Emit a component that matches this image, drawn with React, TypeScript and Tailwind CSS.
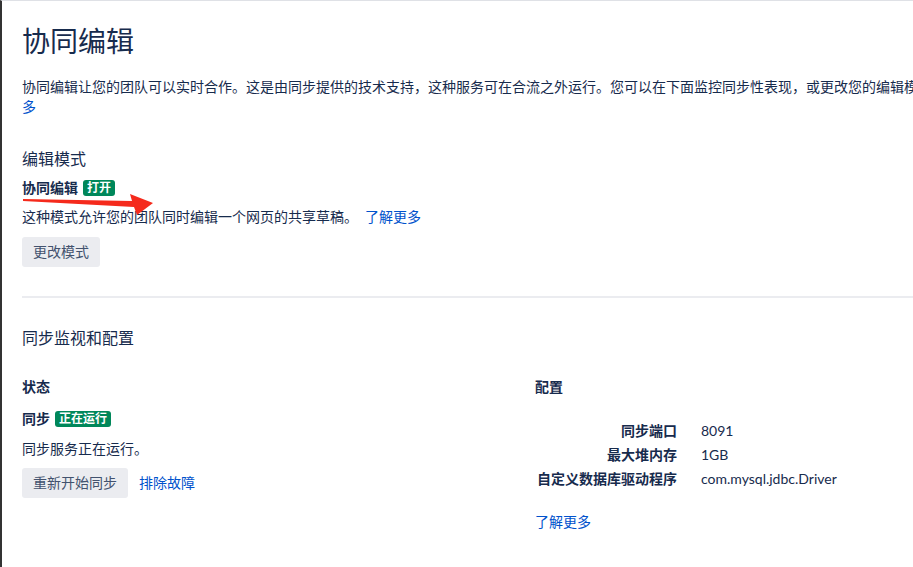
export default function App() {
  return (
    <div className="relative w-[913px] h-[567px] overflow-hidden bg-white border-l-2 border-l-[#333] border-t border-t-[#dfe1e6] font-['Lato','Noto_Sans_CJK_SC',sans-serif] text-[#172b4d] text-[14px] leading-[20px]">
      <div className="w-[1030px] pl-[20px]">
        <h1 className="mt-[22px] text-[28px] leading-[36px] font-normal">协同编辑</h1>
        <p className="mt-[18px] w-[975px]">
          协同编辑让您的团队可以实时合作。这是由同步提供的技术支持，这种服务可在合流之外运行。您可以在下面监控同步性表现，或更改您的编辑模式。<a className="text-[#0052cc]">了解更多</a>
        </p>

        <h2 className="mt-[30px] text-[16px] leading-[24px]">编辑模式</h2>
        <div className="mt-[7px] flex items-center gap-[5px]">
          <span className="font-bold">协同编辑</span>
          <span className="rounded-[3px] bg-[#00875a] px-[4px] text-[12px] leading-[16px] font-bold text-white">打开</span>
        </div>
        <p className="mt-[9px]">
          这种模式允许您的团队同时编辑一个网页的共享草稿。<a className="ml-[7px] text-[#0052cc]">了解更多</a>
        </p>
        <button className="mt-[10px] rounded-[3px] bg-[#ebecf0] px-[11px] h-[30px] text-[#42526e]">更改模式</button>

        <div className="mt-[29px] h-[2px] bg-[#ebecf0]" />

        <h2 className="mt-[28px] text-[16px] leading-[24px]">同步监视和配置</h2>

        <div className="mt-[27px] grid grid-cols-[513px_1fr]">
          <div>
            <h3 className="font-bold">状态</h3>
            <div className="mt-[12px] flex items-center gap-[5px]">
              <span className="font-bold">同步</span>
              <span className="rounded-[3px] bg-[#00875a] px-[4px] text-[12px] leading-[16px] font-bold text-white">正在运行</span>
            </div>
            <p className="mt-[10px]">同步服务正在运行。</p>
            <div className="mt-[9px] flex items-center gap-[11px]">
              <button className="rounded-[3px] bg-[#ebecf0] px-[11px] h-[30px] text-[#42526e]">重新开始同步</button>
              <a className="text-[#0052cc]">排除故障</a>
            </div>
          </div>
          <div>
            <h3 className="font-bold">配置</h3>
            <table className="mt-[22px] ml-[2px] border-collapse">
              <tbody>
                <tr className="h-[24px]">
                  <th className="pr-[24px] text-right font-bold">同步端口</th>
                  <td>8091</td>
                </tr>
                <tr className="h-[24px]">
                  <th className="pr-[24px] text-right font-bold">最大堆内存</th>
                  <td>1GB</td>
                </tr>
                <tr className="h-[24px]">
                  <th className="pr-[24px] text-right font-bold">自定义数据库驱动程序</th>
                  <td>com.mysql.jdbc.Driver</td>
                </tr>
              </tbody>
            </table>
            <a className="mt-[21px] block text-[#0052cc]">了解更多</a>
          </div>
        </div>
      </div>

      <svg className="absolute left-0 top-0 pointer-events-none" width="913" height="567">
        <polygon points="21,198 130,200 128,193 151,202 135,214 132,206 21,200" fill="#f52a1c" />
      </svg>
    </div>
  );
}
